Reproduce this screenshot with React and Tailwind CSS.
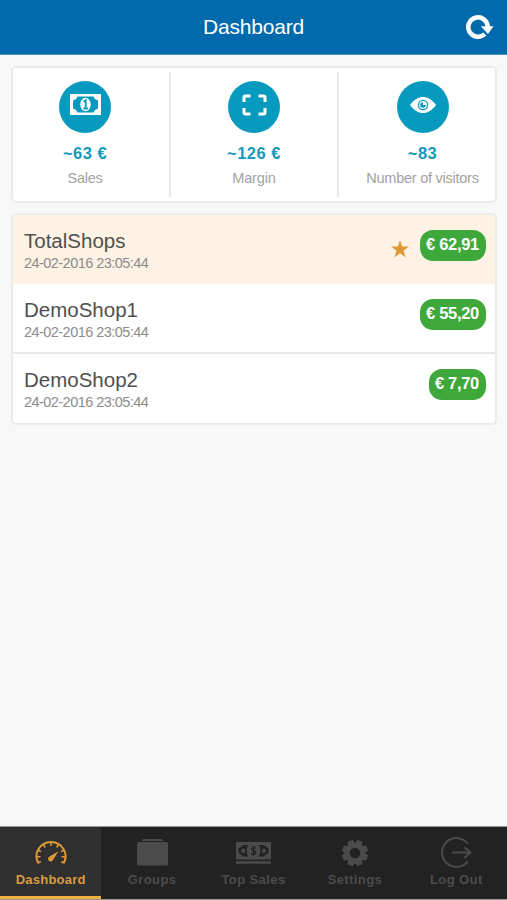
import React from "react";

// Stat icons (white on teal circle)
function MoneyIcon() {
  return (
    <svg width="31" height="21" viewBox="0 0 31 21" className="ml-px">
      <rect width="31" height="21" fill="#fff" />
      <path
        d="M7.500 2.500h16l1.500 2.500 3 1.500v8L25 16l-1.500 2.500h-16L6 16l-3-1.500v-8L6 5z"
        fill="#069abf"
      />
      <ellipse cx="15.5" cy="10.5" rx="5.2" ry="6.8" fill="#fff" />
      <path
        d="M13.500 7.800l2.200-1.500v8M13.300 14.500h4.600"
        fill="none"
        stroke="#069abf"
        strokeWidth="1.8"
      />
    </svg>
  );
}

function ExpandIcon() {
  return (
    <svg width="25" height="22" viewBox="0 0 25 22">
      <path
        d="M2 8V3.5A1.5 1.5 0 0 1 3.500 2H8.500M16.500 2h5A1.500 1.500 0 0 1 23 3.500V8M23 14v4.500a1.500 1.500 0 0 1-1.500 1.500h-5M8.500 20h-5A1.500 1.500 0 0 1 2 18.500V14"
        fill="none"
        stroke="#fff"
        strokeWidth="3"
      />
    </svg>
  );
}

function EyeIcon() {
  return (
    <svg width="26" height="16" viewBox="0 0 26 16">
      <path d="M0 8C4 2.500 8.500 0 13 0s9 2.500 13 8c-4 5.500-8.500 8-13 8S4 13.500 0 8z" fill="#fff" />
      <circle cx="13" cy="8" r="5.200" fill="#069abf" />
      <circle cx="13" cy="8" r="3.900" fill="#fff" />
      <path d="M13 8V5.200A2.800 2.800 0 1 0 15.800 8z" fill="#069abf" />
    </svg>
  );
}

function RefreshIcon() {
  return (
    <svg width="28" height="26" viewBox="0 0 28 26">
      <path
        d="M18.800 20A9.700 9.700 0 1 1 21.700 13"
        fill="none"
        stroke="#fff"
        strokeWidth="4.500"
      />
      <path d="M14.800 12.300h12.800L21.900 20z" fill="#fff" />
    </svg>
  );
}

// Tab bar icons
function GaugeIcon() {
  return (
    <svg width="32" height="24" viewBox="0 0 32 24" fill="none" stroke="currentColor">
      <path d="M3.300 22.200A14.500 14.300 0 1 1 28.700 22.200" strokeWidth="2" />
      <path
        d="M16 1v4M8.500 3.500l1.800 3M23.500 3.500l-1.800 3M3 9l3 1.700M29 9l-3 1.700M1.500 15.800h4M30.500 15.800h-4M3 22l2.800-1.300M29 22l-2.800-1.300"
        strokeWidth="1.500"
      />
      <path d="M23.500 10.200L18 19a2.600 2.600 0 1 1-3.500-3.500z" fill="currentColor" stroke="none" />
    </svg>
  );
}

function FolderIcon() {
  return (
    <svg width="31" height="27" viewBox="0 0 31 27" fill="currentColor">
      <path d="M6.500 0h18l2.500 2H4z" />
      <path d="M1.500 3h28a1.500 1.500 0 0 1 1.500 1.500V25a1.500 1.500 0 0 1-1.500 1.500h-28A1.500 1.500 0 0 1 0 25V4.500A1.500 1.500 0 0 1 1.500 3z" />
    </svg>
  );
}

function CashIcon() {
  return (
    <svg width="35" height="22" viewBox="0 0 35 22">
      <path d="M0 0h35v17.500H0zM0 19.300h35v2.500H0z" fill="currentColor" />
      <path
        d="M7.500 3h5c-2.500 3-2.500 8 0 11.500h-5L2.500 11V6.500zM27.500 3h-5c2.500 3 2.500 8 0 11.500h5l5-3.500V6.500z"
        fill="#222"
      />
      <ellipse cx="7.200" cy="8.800" rx="2" ry="2.400" fill="currentColor" />
      <ellipse cx="27.800" cy="8.800" rx="2" ry="2.400" fill="currentColor" />
      <path
        d="M19.800 6.500c-1-1.300-4.300-1.400-4.300.7 0 2.100 4.300 1.100 4.300 3.300 0 2-3.400 2.100-4.600.6M17.600 3.800v9.900"
        fill="none"
        stroke="#222"
        strokeWidth="1.300"
      />
    </svg>
  );
}

function GearIcon() {
  return (
    <svg width="26" height="26" viewBox="0 0 26 26">
      <g fill="currentColor">
        {[22.5, 67.5, 112.5, 157.5, 202.5, 247.5, 292.5, 337.5].map((deg) => (
          <path key={deg} d="M9 5L10.300-.2h5.400L17 5z" transform={`rotate(${deg} 13 13)`} />
        ))}
      </g>
      <circle cx="13" cy="13" r="7.900" fill="none" stroke="currentColor" strokeWidth="5.200" />
    </svg>
  );
}

function LogoutIcon() {
  return (
    <svg width="31" height="31" viewBox="0 0 31 31" fill="none" stroke="currentColor">
      <path d="M26.800 6.700A14.400 14.400 0 1 0 26.800 24.300" strokeWidth="2" />
      <path d="M11 15.500h18M23.500 10.300l5.800 5.200-5.800 5.200" strokeWidth="2" />
    </svg>
  );
}

const stats = [
  { label: "Sales", value: "~63 €", icon: <MoneyIcon />, spacing: "tracking-[-0.3px]" },
  { label: "Margin", value: "~126 €", icon: <ExpandIcon />, spacing: "tracking-[-0.15px]" },
  { label: "Number of visitors", value: "~83", icon: <EyeIcon />, spacing: "tracking-[-0.25px]" },
];

const shops = [
  { name: "TotalShops", date: "24-02-2016 23:05:44", amount: "€ 62,91", starred: true },
  { name: "DemoShop1", date: "24-02-2016 23:05:44", amount: "€ 55,20" },
  { name: "DemoShop2", date: "24-02-2016 23:05:44", amount: "€ 7,70" },
];

const tabs = [
  { label: "Dashboard", icon: <GaugeIcon />, active: true },
  { label: "Groups", icon: <FolderIcon /> },
  { label: "Top Sales", icon: <CashIcon /> },
  { label: "Settings", icon: <GearIcon /> },
  { label: "Log Out", icon: <LogoutIcon /> },
];

function StatCard() {
  return (
    <section className="mt-[11px] mr-[10px] ml-[11px] h-[137px] rounded-[5px] border-2 border-[#ebebeb] bg-white">
      <div className="-mr-[11px] -ml-3 grid grid-cols-[170px_168px_1fr] pt-1">
        {stats.map((s, i) => (
          <div
            key={s.label}
            className={`flex h-[125px] flex-col items-center pt-[9px] ${
              i < 2 ? "border-r-2 border-[#e9e9e9]" : ""
            }`}
          >
            <div className="flex h-[52px] w-[52px] items-center justify-center rounded-full bg-[#069abf] pb-[5px]">
              {s.icon}
            </div>
            <div className="mt-[9px] text-[16.500px] leading-[22px] font-bold tracking-[0.5px] text-[#1299bb]">
              {s.value}
            </div>
            <div className={`mt-[3px] text-[14.500px] leading-[22px] whitespace-nowrap text-[#a2a2a2] ${s.spacing}`}>
              {s.label}
            </div>
          </div>
        ))}
      </div>
    </section>
  );
}

function ShopRow({ shop, last }) {
  return (
    <li
      className={`flex items-start justify-between pt-[15px] pr-[9px] pl-[11px] ${
        shop.starred
          ? "h-[69px] bg-[#fef2e4]"
          : last
          ? "h-[69px]"
          : "h-[70px] border-b-2 border-[#e8e8e8]"
      }`}
    >
      <div className="-mt-px">
        <div className="text-[20.500px] leading-[24px] text-[#505050]">{shop.name}</div>
        <div className="text-[14.500px] leading-[20px] tracking-[-0.55px] text-[#8c8c8c]">{shop.date}</div>
      </div>
      <div className="flex items-start">
        {shop.starred && (
          <svg width="18" height="18" viewBox="0 0 18 18" className="mt-[10px] mr-[11px]">
            <path d="M9 0l2.200 6.600H18l-5.500 4.100 2.100 6.700L9 13.300l-5.600 4.100 2.100-6.700L0 6.600h6.800z" fill="#de9a38" />
          </svg>
        )}
        <span className="h-[31px] rounded-[13px] bg-[#3ea83a] pr-[7px] pl-[6px] text-[16.500px] leading-[28px] font-bold tracking-[-0.3px] whitespace-nowrap text-white">
          {shop.amount}
        </span>
      </div>
    </li>
  );
}

function TabBar() {
  return (
    <nav className="flex h-[74px] border-t border-b border-[#999] bg-[#222]">
      {tabs.map((t) => (
        <div
          key={t.label}
          className={`flex flex-1 flex-col items-center text-[13px] font-bold ${
            t.active
              ? "border-b-[3px] border-[#f0ad42] bg-[#303030] text-[#de9a38]"
              : "bg-[#222] text-[#4b4b4b]"
          }`}
        >
          <div className="mt-2 flex h-[35px] items-center">{t.icon}</div>
          <span
            className={`leading-[19px] ${t.active ? "tracking-[0.25px]" : "tracking-[0.4px]"}`}
          >
            {t.label}
          </span>
        </div>
      ))}
    </nav>
  );
}

const App = () => {
  return (
    <div
      className="flex h-[900px] w-[507px] flex-col overflow-hidden bg-[#f8f8f8]"
      style={{ fontFamily: '"Liberation Sans", Arial, sans-serif' }}
    >
      <header className="grid h-[55px] grid-cols-[1fr_auto_1fr] items-center border-b border-[#4d93c2] bg-[#006aad] pr-[13px]">
        <span />
        <h1 className="pl-[13px] text-[21px] tracking-[-0.2px] text-white">Dashboard</h1>
        <button className="justify-self-end" aria-label="Refresh">
          <RefreshIcon />
        </button>
      </header>
      <main className="flex-1">
        <StatCard />
        <ul className="mt-[10px] mr-[10px] ml-[11px] overflow-hidden rounded-[5px] border-2 border-[#ebebeb] bg-white">
          {shops.map((shop, i) => (
            <ShopRow key={shop.name} shop={shop} last={i === shops.length - 1} />
          ))}
        </ul>
      </main>
      <TabBar />
    </div>
  );
};

export default App;
